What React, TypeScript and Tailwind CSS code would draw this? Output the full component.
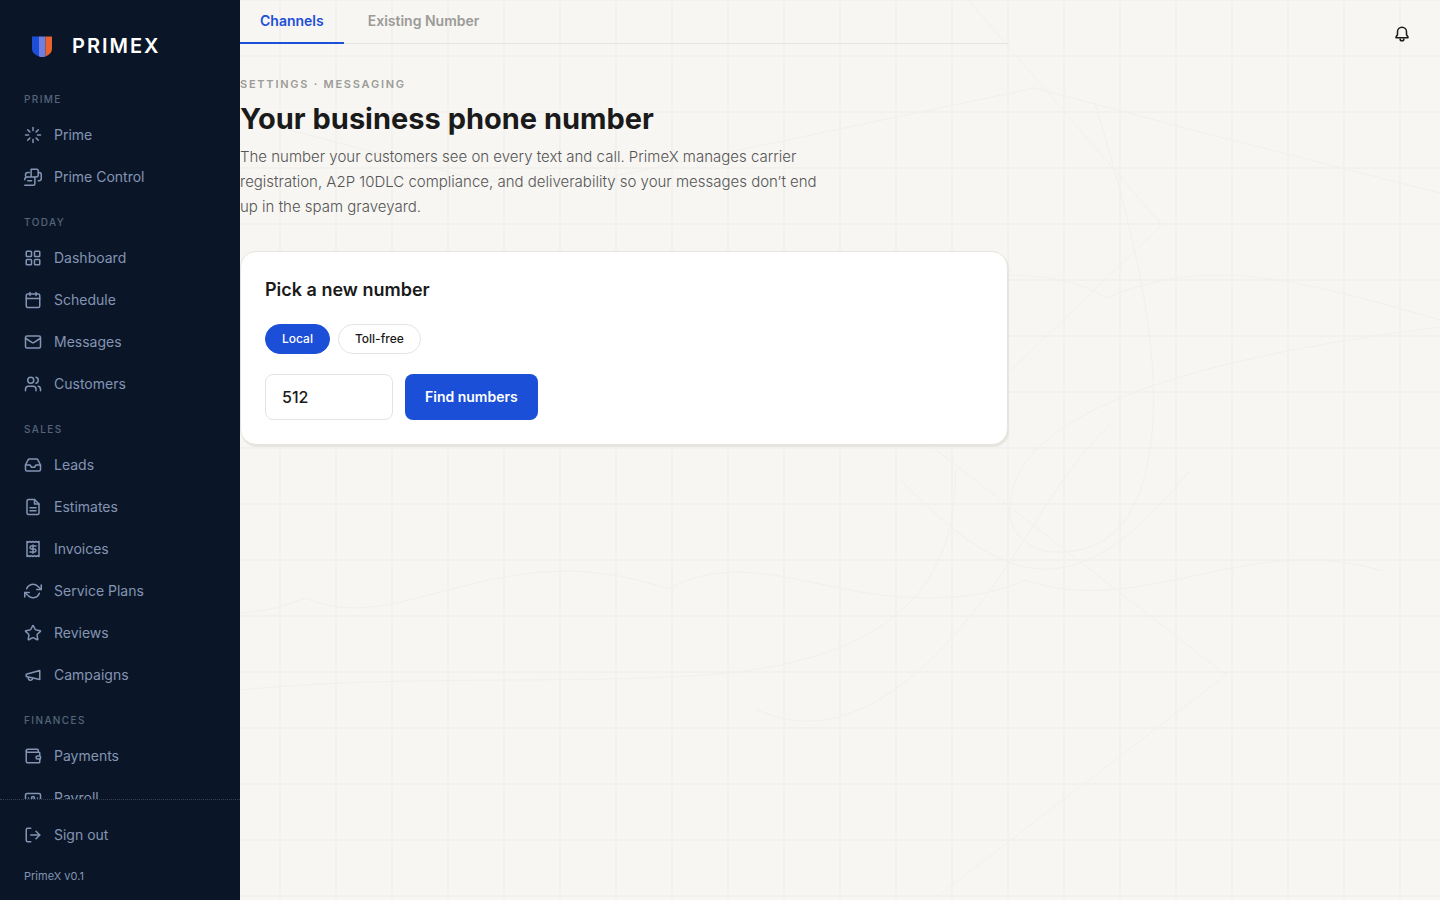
import { Banknote, Calendar, Inbox, LayoutGrid, Loader, LogOut, Mail, Star, Users, Wallet } from 'lucide-react'
import { useState, type ComponentType } from 'react'

type IconProps = { className?: string; strokeWidth?: number }
type NavItem = { label: string; icon: ComponentType<IconProps> }
type NavGroup = { title: string; items: NavItem[] }

// Outline icons on the same 24 unit grid as lucide
function outline(...paths: string[]) {
  return function OutlineIcon({ className, strokeWidth = 2 }: IconProps) {
    return (
      <svg className={className} viewBox="0 0 24 24" fill="none" stroke="currentColor" strokeWidth={strokeWidth} strokeLinecap="round" strokeLinejoin="round" aria-hidden="true">
        {paths.map((d) => (
          <path key={d} d={d} />
        ))}
      </svg>
    )
  }
}

const ControlIcon = outline(
  'M9.500 12V1.500H17a2 2 0 0 1 2 2V9a3 3 0 0 1-3 3H4',
  'M19 6h1a3 3 0 0 1 3 3v5a3 3 0 0 1-3 3h-1',
  'M7 6H5a3 3 0 0 0-3 3v1.500',
  'M14.500 12v9a2 2 0 0 1-2 2H1',
  'M4 12a3.500 3.500 0 0 0-3 3.500M10 17H5',
)
const FileIcon = outline('M14 2H6a2 2 0 0 0-2 2v16a2 2 0 0 0 2 2h12a2 2 0 0 0 2-2V8Z', 'M14 2v6h6', 'M8 13h8M8 17h8')
const InvoiceIcon = outline(
  'M4 2v20l2-1 2 1 2-1 2 1 2-1 2 1 2-1 2 1V2l-2 1-2-1-2 1-2-1-2 1-2-1-2 1Z',
  'M16 8h-6a2 2 0 1 0 0 4h4a2 2 0 1 1 0 4H8',
  'M12 17.500v-11',
)
const RefreshIcon = outline('M23 4v6h-6M1 20v-6h6', 'M3.510 9a9 9 0 0 1 14.850-3.360L23 10M1 14l4.640 4.360A9 9 0 0 0 20.490 15')
const MegaphoneIcon = outline('m3 11 18-5v12L3 14Z', 'M11.600 16.800a3 3 0 1 1-5.800-1.600')
const BellIcon = outline('M12 3a6 6 0 0 0-6 6v4l-2 3v1h16v-1l-2-3V9a6 6 0 0 0-6-6Z', 'M9.500 18.500a2.500 2.500 0 0 0 5 0')

const groups: NavGroup[] = [
  {
    title: 'PRIME',
    items: [
      { label: 'Prime', icon: Loader },
      { label: 'Prime Control', icon: ControlIcon },
    ],
  },
  {
    title: 'TODAY',
    items: [
      { label: 'Dashboard', icon: LayoutGrid },
      { label: 'Schedule', icon: Calendar },
      { label: 'Messages', icon: Mail },
      { label: 'Customers', icon: Users },
    ],
  },
  {
    title: 'SALES',
    items: [
      { label: 'Leads', icon: Inbox },
      { label: 'Estimates', icon: FileIcon },
      { label: 'Invoices', icon: InvoiceIcon },
      { label: 'Service Plans', icon: RefreshIcon },
      { label: 'Reviews', icon: Star },
      { label: 'Campaigns', icon: MegaphoneIcon },
    ],
  },
  {
    title: 'FINANCES',
    items: [
      { label: 'Payments', icon: Wallet },
      { label: 'Payroll', icon: Banknote },
    ],
  },
]

function Logo() {
  return (
    <svg className="size-6" viewBox="0 0 24 24" aria-hidden="true">
      <path d="M2 2.500h7v20Q2 20 2 15Z" fill="#1d4ed8" />
      <path d="M9 2.500h6.500v20q-3.500 1-6.500 0Z" fill="#6f7fe0" />
      <path d="M15.500 2.500H22V15q0 5-6.500 7.500Z" fill="#ea622d" />
    </svg>
  )
}

function Sidebar() {
  return (
    <aside className="flex h-full w-60 shrink-0 flex-col bg-[#0a1628] text-[#8494b2]">
      <div className="flex h-[91px] shrink-0 items-center gap-[18px] pl-[30px]">
        <Logo />
        <span className="text-xl font-semibold tracking-widest text-white">PRIMEX</span>
      </div>
      <nav className="min-h-0 flex-1 overflow-x-hidden overflow-y-auto [scrollbar-width:none]">
        {groups.map((group) => (
          <section key={group.title} className="mb-4">
            <h2 className="px-6 pb-[7px] text-[10px] leading-4 font-medium tracking-[0.14em] text-[#56647b]">{group.title}</h2>
            {group.items.map(({ label, icon: Icon }) => (
              <a key={label} href="#" className="flex h-[42px] items-center gap-3 px-6 text-sm">
                <Icon className="size-[18px]" strokeWidth={2} />
                {label}
              </a>
            ))}
          </section>
        ))}
      </nav>
      <div className="h-[101px] shrink-0 border-t border-dotted border-[#344056] pt-[14px]">
        <button type="button" className="flex h-[42px] w-full items-center gap-3 px-6 text-sm">
          <LogOut className="size-[18px]" strokeWidth={2} />
          Sign out
        </button>
        <p className="mt-3 px-6 text-[11px] leading-4">PrimeX v0.1</p>
      </div>
    </aside>
  )
}

// Faint survey lines drawn over the grid
function Backdrop() {
  return (
    <svg className="absolute inset-0 size-full" viewBox="0 0 1200 900" preserveAspectRatio="xMinYMin slice" fill="none" stroke="#f1f0ec" aria-hidden="true">
      <path d="M50 130 220 175Q310 195 380 175L795 88 960 132 1200 193" />
      <path d="M728 0 922 225 768 373" />
      <path d="M855 103C890 220 925 350 910 450S840 552 815 552 765 530 770 505Q775 380 1200 327" />
      <path d="M768 275Q830 275 866 298C960 260 1030 270 1200 320" />
      <path d="M0 690C150 675 300 684 450 676S720 620 715 470" />
      <path d="M0 613Q40 610 65 598C160 640 260 530 428 589 500 550 570 590 660 597 700 598 740 600 785 580 900 620 1010 530 1142 571" />
      <path d="M690 445 986 675 695 898" />
      <path d="M516 709C600 750 680 680 735 610S820 470 870 425" />
      <path d="M660 480C760 580 830 620 950 470" />
    </svg>
  )
}

const tabs = ['Channels', 'Existing Number']
const numberTypes = ['Local', 'Toll-free']

export default function App() {
  const [tab, setTab] = useState('Channels')
  const [numberType, setNumberType] = useState('Local')
  const [areaCode, setAreaCode] = useState('512')

  return (
    <div className="flex h-screen overflow-hidden bg-[#f7f6f2] font-['Inter',sans-serif] text-[#1a1a1a]">
      <Sidebar />
      <main className="relative min-w-0 flex-1 bg-[linear-gradient(to_right,#f2f1ed_2px,transparent_2px),linear-gradient(to_bottom,#f2f1ed_2px,transparent_2px)] bg-size-[56px_56px] bg-position-[39px_-1px]">
        <Backdrop />
        <button type="button" aria-label="Notifications" className="absolute top-[25px] right-[29px]">
          <BellIcon className="size-[18px]" strokeWidth={2} />
        </button>

        <div className="relative max-w-3xl">
          <div role="tablist" className="flex h-11 gap-1 border-b border-[#e5e4df] text-sm font-semibold">
            {tabs.map((name) => (
              <button
                key={name}
                type="button"
                role="tab"
                aria-selected={tab === name}
                onClick={() => setTab(name)}
                className={`-mb-px border-b-2 px-5 ${tab === name ? 'border-[#1c4fd8] text-[#1c4fd8]' : 'border-transparent text-[#9b9b98]'}`}
              >
                {name}
              </button>
            ))}
          </div>

          <header className="pt-8">
            <p className="text-[11px] leading-4 font-semibold tracking-[0.16em] text-[#9b9b98]">SETTINGS · MESSAGING</p>
            <h1 className="mt-2 text-[29px] leading-[38px] font-bold">Your business phone number</h1>
            <p className="mt-1.5 max-w-[590px] text-[15px] leading-[25px] font-light text-[#555555]">
              The number your customers see on every text and call. PrimeX manages carrier registration, A2P 10DLC compliance, and deliverability so your messages don’t end up in the spam graveyard.
            </p>
          </header>

          <section className="mt-8 rounded-2xl border border-[#e5e4df] bg-white p-6 shadow-[1px_2px_1px_#e5e4df]">
            <h2 className="text-lg leading-7 font-semibold">Pick a new number</h2>
            <div className="mt-5 flex gap-2">
              {numberTypes.map((type) => (
                <button
                  key={type}
                  type="button"
                  aria-pressed={numberType === type}
                  onClick={() => setNumberType(type)}
                  className={`h-[30px] rounded-full border px-4 text-xs font-medium ${numberType === type ? 'border-[#1c4fd8] bg-[#1c4fd8] text-white' : 'border-[#e5e4df] bg-white'}`}
                >
                  {type}
                </button>
              ))}
            </div>
            <div className="mt-5 flex gap-3">
              <input
                type="text"
                aria-label="Area code"
                value={areaCode}
                onChange={(e) => setAreaCode(e.target.value)}
                className="h-[46px] w-32 rounded-lg border border-[#e5e4df] bg-white px-4 text-base font-medium"
              />
              <button type="button" className="h-[46px] rounded-lg bg-[#1c4fd8] px-5 text-sm font-semibold text-white">
                Find numbers
              </button>
            </div>
          </section>
        </div>
      </main>
    </div>
  )
}
